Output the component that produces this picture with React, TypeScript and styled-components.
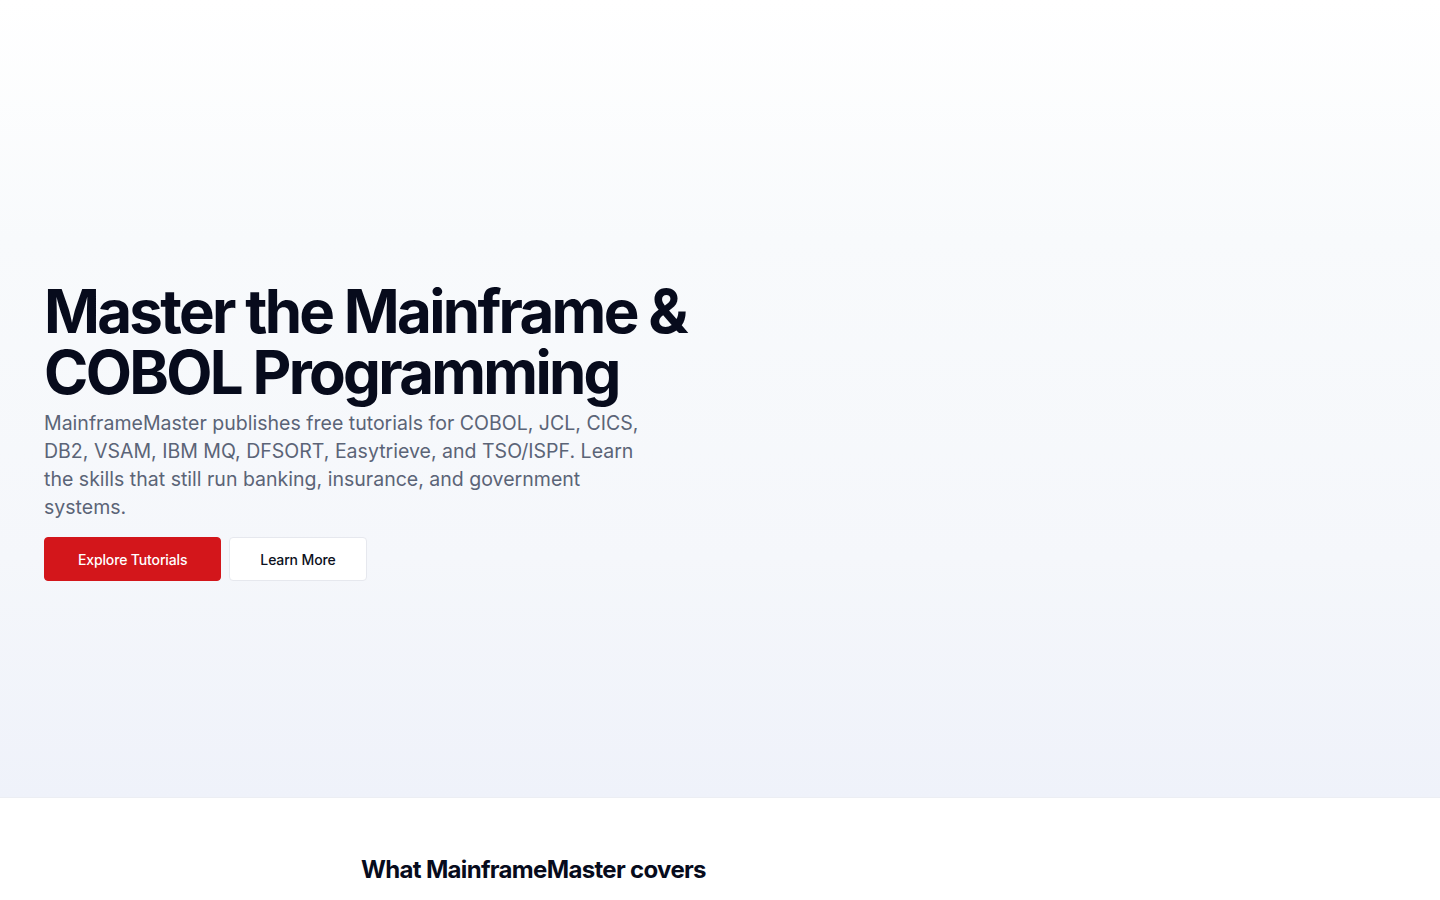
import * as React from 'react';
import styled, { createGlobalStyle } from 'styled-components';

const Global = createGlobalStyle`
  * { box-sizing: border-box; }
  body {
    margin: 0;
    background: #ffffff;
    font-family: Inter, "Noto Sans", sans-serif;
    color: #0b1020;
  }
`;

const Hero = styled.section`
  height: 798px;
  padding: 281px 44px 0;
  background: linear-gradient(180deg, #ffffff 0%, #f8fafc 30%, #f5f7fb 70%, #eff2fa 100%);
  border-bottom: 1px solid #eceef3;
`;

const Title = styled.h1`
  margin: 0;
  font-size: 60px;
  line-height: 61px;
  font-weight: 700;
  letter-spacing: -0.045em;
  color: #070b1c;
`;

const Lead = styled.p`
  margin: 6px 0 0;
  max-width: 610px;
  font-size: 19.55px;
  line-height: 28px;
  color: #5b6477;
`;

const Actions = styled.div`
  display: flex;
  gap: 8px;
  margin-top: 16px;
`;

const Button = styled.button<{ $primary?: boolean }>`
  height: 44px;
  padding: 0 ${(p) => (p.$primary ? '33px' : '30px')};
  border-radius: 4px;
  font-family: inherit;
  font-size: 14px;
  font-weight: 500;
  letter-spacing: -0.01em;
  cursor: pointer;
  border: 1px solid ${(p) => (p.$primary ? '#d3161b' : '#e6e8ee')};
  background: ${(p) => (p.$primary ? '#d3161b' : '#ffffff')};
  color: ${(p) => (p.$primary ? '#ffffff' : '#0b1020')};
`;

const Covers = styled.section`
  padding: 56px 0 0 361px;
`;

const CoversTitle = styled.h2`
  margin: 0;
  font-size: 24px;
  line-height: 32px;
  font-weight: 700;
  letter-spacing: -0.028em;
  color: #070b1c;
`;

export default function App() {
  return (
    <>
      <Global />
      <Hero>
        <Title>
          Master the Mainframe &amp;
          <br />
          COBOL Programming
        </Title>
        <Lead>
          MainframeMaster publishes free tutorials for COBOL, JCL, CICS, DB2, VSAM, IBM MQ,
          DFSORT, Easytrieve, and TSO/ISPF. Learn the skills that still run banking, insurance,
          and government systems.
        </Lead>
        <Actions>
          <Button $primary>Explore Tutorials</Button>
          <Button>Learn More</Button>
        </Actions>
      </Hero>
      <Covers>
        <CoversTitle>What MainframeMaster covers</CoversTitle>
      </Covers>
    </>
  );
}
